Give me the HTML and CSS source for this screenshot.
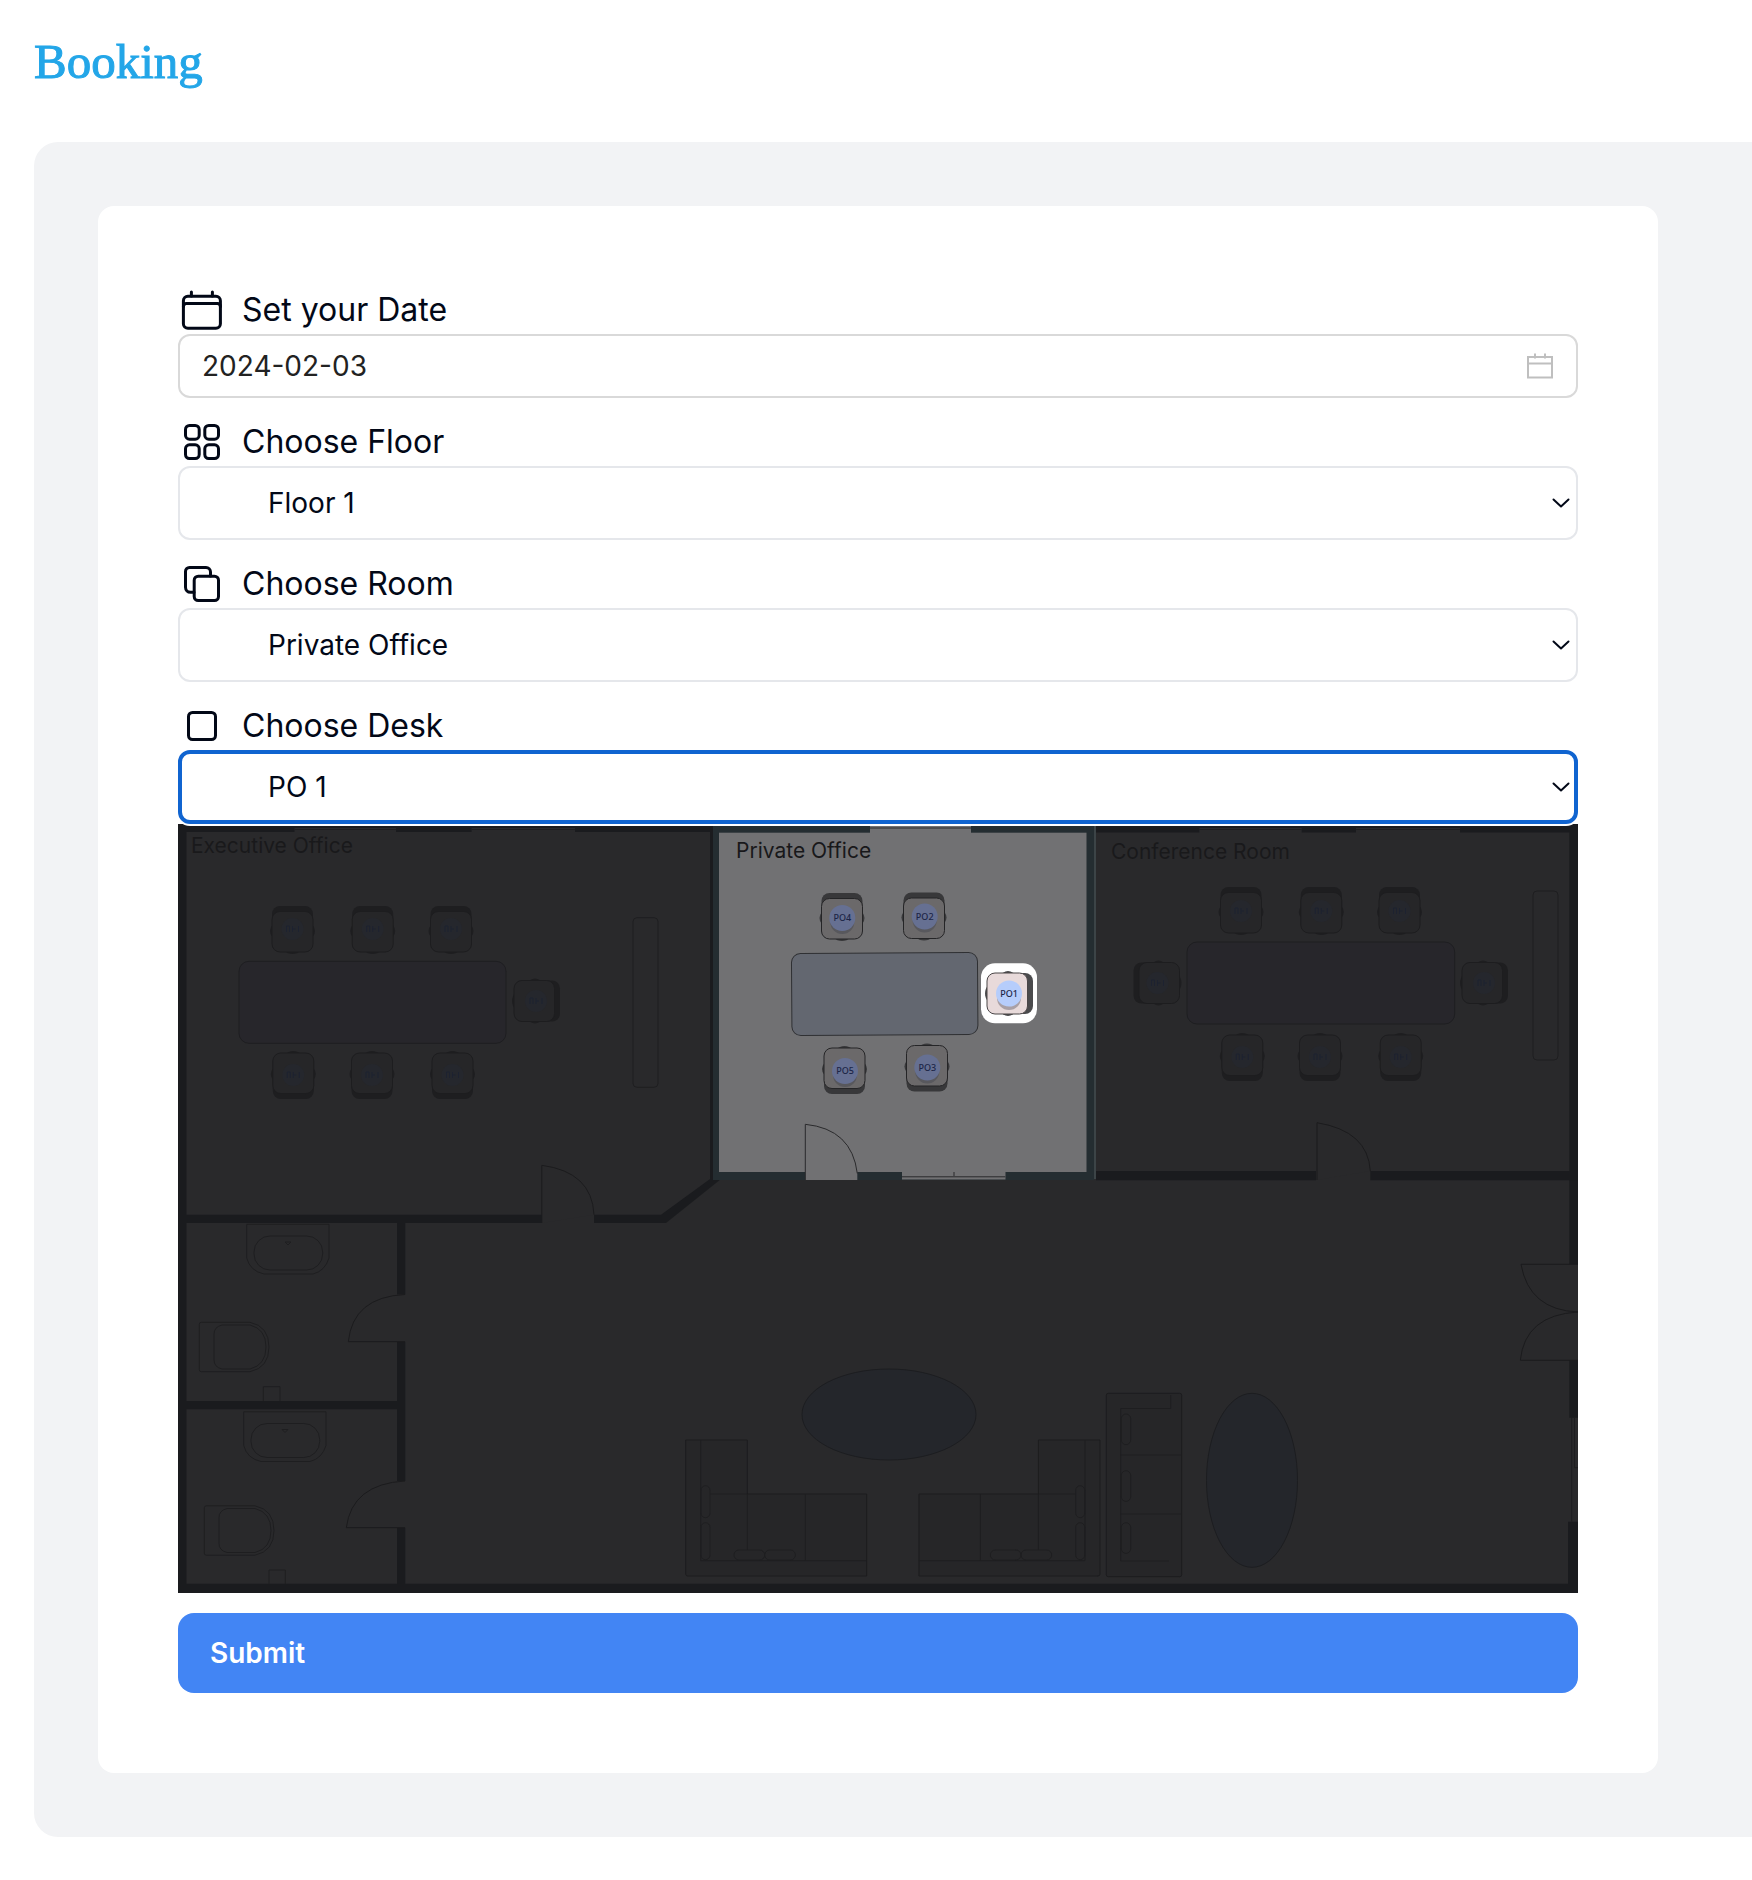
FILE: index.html
```html
<!DOCTYPE html>
<html lang="en">
<head>
<meta charset="utf-8">
<meta name="viewport" content="width=device-width, initial-scale=1">
<title>Booking</title>
<link rel="stylesheet" href="styles.css">
</head>
<body>
<header class="page-header">
  <h1 class="page-title">Booking</h1>
</header>
<main class="panel">
  <form class="card">
    <div class="field">
      <label class="field-label" for="date">
        <svg class="field-icon" viewBox="0 0 48 48" aria-hidden="true"><rect x="5.400" y="10.200" width="37" height="32" rx="4.500"/><path d="M5.400 20.500c0-2 1-3 3-3h31c2 0 3 1 3 3M13.400 6V10M34.400 6V10"/></svg>
        Set your Date
      </label>
      <div class="date-box">
        <input class="date-input" id="date" type="text" value="2024-02-03">
        <svg class="date-icon" viewBox="0 0 28 28" aria-hidden="true"><path d="M2 5h24v20.500H2zM2 11.500h24M9 1.500v5M19 1.500v5"/></svg>
      </div>
    </div>
    <div class="field">
      <label class="field-label" for="floor">
        <svg class="field-icon" viewBox="0 0 48 48" aria-hidden="true"><rect x="7.500" y="7.500" width="13.700" height="13.700" rx="4"/><rect x="26.800" y="7.500" width="13.700" height="13.700" rx="4"/><rect x="7.500" y="26.800" width="13.700" height="13.700" rx="4"/><rect x="26.800" y="26.800" width="13.700" height="13.700" rx="4"/></svg>
        Choose Floor
      </label>
      <div class="select-box">
        <select class="select" id="floor"><option>Floor 1</option></select>
        <svg class="chevron" viewBox="0 0 24 24" aria-hidden="true"><path d="M4.500 8.500l7.500 7 7.500-7"/></svg>
      </div>
    </div>
    <div class="field">
      <label class="field-label" for="room">
        <svg class="field-icon" viewBox="0 0 48 48" aria-hidden="true"><rect x="16.200" y="16.200" width="24.300" height="24.300" rx="4"/><path d="M16 32.300h-3.500a5 5 0 0 1-5-5v-15.800a4 4 0 0 1 4-4h16.500a4.500 4.500 0 0 1 4.500 4.500v4"/></svg>
        Choose Room
      </label>
      <div class="select-box">
        <select class="select" id="room"><option>Private Office</option></select>
        <svg class="chevron" viewBox="0 0 24 24" aria-hidden="true"><path d="M4.500 8.500l7.500 7 7.500-7"/></svg>
      </div>
    </div>
    <div class="field">
      <label class="field-label" for="desk">
        <svg class="field-icon" viewBox="0 0 48 48" aria-hidden="true"><rect x="10.500" y="10.500" width="27" height="27" rx="4"/></svg>
        Choose Desk
      </label>
      <div class="select-box select-box-active">
        <select class="select" id="desk"><option>PO 1</option></select>
        <svg class="chevron" viewBox="0 0 24 24" aria-hidden="true"><path d="M4.500 8.500l7.500 7 7.500-7"/></svg>
      </div>
      <svg class="plan" viewBox="0 0 1400 769" role="img" aria-label="Floor 1 plan with desk PO1 selected">
        <defs>
          <!-- Chair facing down, centred on the origin, backrest on top -->
          <g id="chair">
            <rect class="chair-back" x="-20.500" y="-24" width="41" height="30" rx="8"/>
            <ellipse class="chair-back" cx="0" cy="1" rx="22.500" ry="13"/>
            <ellipse class="chair-back" cx="0" cy="12" rx="12" ry="12"/>
            <rect class="chair-seat" x="-20.500" y="-18.500" width="41" height="40.500" rx="8"/>
          </g>
          <g id="tag">
            <circle class="tag-dot" r="11"/>
            <path class="tag-mark" d="M-6-3v6M-6-3h3v6M0-3v6M0 0h3M6-3v6"/>
          </g>
          <g id="sofa">
            <path class="sofa" d="M507.700 616H569.300V670H688.700V752H509.700q-2 0-2-2z"/>
            <path class="line" d="M522.700 616V736.700H688.700M532 670H569.300V726M627.300 670V736.700"/>
            <rect class="line" x="523" y="661.700" width="9" height="32" rx="4.500"/>
            <rect class="line" x="523" y="698.700" width="9" height="37" rx="4.500"/>
            <rect class="line" x="556" y="726" width="30.700" height="10" rx="5"/>
            <rect class="line" x="586.700" y="726" width="30.700" height="10" rx="5"/>
          </g>
          <g id="washroom">
            <path class="line" d="M68.700 400.300H151V434q-4 13-16 16H86q-14-3-17.300-16z"/>
            <rect class="line" x="76" y="412" width="68.700" height="34" rx="16"/>
            <path class="line" d="M107 418l3 3 3-3z"/>
          </g>
          <g id="toilet">
            <path class="line" d="M23.300 498.300H72q19 4 19 24.700t-19 24.700H23.300q-2 0-2-2V500.300q0-2 2-2z"/>
            <path class="line" d="M44 501H72q16 4 16 22t-16 22H44q-8-2-8-9V510q0-7 8-9z"/>
          </g>
        </defs>

        <rect class="floor" width="1400" height="769"/>

        <!-- Outer and inner walls -->
        <path class="wall" d="M0 0H1400V440.300H1391.300V8.500H1282V4H1178V8.500H1123.700V4H1021.300V8.500H541V8H397V4H293.600V8H218V4H116.500V8H8.500V390.700H363.800V399H227.300V470.500H219V399H8.500V577H219V517.700H227.300V657H219V585.300H8.500V759.700H219V703.700H227.300V759.700H1390V697.700H1400V769H0z"/>
        <path class="wall" d="M1391.300 536.300H1400V593.700H1391.300zM532 2H541V356H532zM918 347H1138V356.300H918zM1192.300 347H1400V356.300H1192.300zM416 390.700H483L532 355H543L488 399H416z"/>
        <path class="line" d="M116.500 5.500H218M293.600 5.500H397M1021.300 5.500H1123.700M1178 5.500H1282M1393.700 593.700V697.700M1396.500 593.700V643.700H1400"/>

        <!-- Doors -->
        <path class="door" d="M363.800 399V341.300Q414 348 416 390.700"/>
        <path class="door" d="M1139 356V298.700Q1190 307 1192.300 347"/>
        <path class="door" d="M227 470.500Q175 473 170.300 517.700H227"/>
        <path class="door" d="M227 657Q174 660 168.300 703.700H227"/>
        <path class="door" d="M1400 440.300H1343Q1351 486 1400 488Q1347 491 1342.300 536.300H1400"/>

        <!-- Executive office -->
        <text class="room-name room-name-dim" x="13" y="29">Executive Office</text>
        <g class="dim">
          <rect class="table" x="61" y="137.300" width="267" height="82" rx="10"/>
          <rect class="line" x="455" y="93.700" width="25" height="169.600" rx="4"/>
          <use href="#chair" x="114.500" y="106"/><use href="#tag" x="114.500" y="105"/>
          <use href="#chair" x="194.700" y="106"/><use href="#tag" x="194.700" y="105"/>
          <use href="#chair" x="273" y="106"/><use href="#tag" x="273" y="105"/>
          <use href="#chair" transform="translate(358 177) rotate(90)"/><use href="#tag" x="358" y="177"/>
          <use href="#chair" transform="translate(115.300 251) rotate(180)"/><use href="#tag" x="115.300" y="251"/>
          <use href="#chair" transform="translate(194 251) rotate(180)"/><use href="#tag" x="194" y="251"/>
          <use href="#chair" transform="translate(274.500 251) rotate(180)"/><use href="#tag" x="274.500" y="251"/>
        </g>

        <!-- Conference room -->
        <text class="room-name room-name-dim" x="933" y="35">Conference Room</text>
        <g class="dim">
          <rect class="table" x="1009" y="118" width="267.700" height="82" rx="10"/>
          <rect class="line" x="1355" y="67" width="25" height="169" rx="4"/>
          <use href="#chair" x="1063" y="87"/><use href="#tag" x="1063" y="87"/>
          <use href="#chair" x="1143.300" y="87"/><use href="#tag" x="1143.300" y="87"/>
          <use href="#chair" x="1221.500" y="87"/><use href="#tag" x="1221.500" y="87"/>
          <use href="#chair" transform="translate(979.500 159) rotate(-90)"/><use href="#tag" x="979.500" y="159"/>
          <use href="#chair" transform="translate(1306 159) rotate(90)"/><use href="#tag" x="1306" y="159"/>
          <use href="#chair" transform="translate(1064.300 233) rotate(180)"/><use href="#tag" x="1064.300" y="233"/>
          <use href="#chair" transform="translate(1142 233) rotate(180)"/><use href="#tag" x="1142" y="233"/>
          <use href="#chair" transform="translate(1222.700 233) rotate(180)"/><use href="#tag" x="1222.700" y="233"/>
        </g>

        <!-- Washrooms -->
        <use href="#washroom"/>
        <use href="#washroom" x="-3" y="187.500"/>
        <use href="#toilet"/>
        <use href="#toilet" x="5" y="183.500"/>
        <path class="line" d="M85.300 577V562.700H102V577M91 760V746H107.300V760"/>

        <!-- Lounge -->
        <ellipse class="coffee-table" cx="711" cy="590.500" rx="87" ry="45.500"/>
        <ellipse class="coffee-table" cx="1074" cy="656.300" rx="45.500" ry="87"/>
        <use href="#sofa"/>
        <use href="#sofa" transform="translate(1429.700 0) scale(-1 1)"/>
        <rect class="sofa" x="928.300" y="569.300" width="75.400" height="183.400" rx="2"/>
        <path class="line" d="M992.700 571V584.500H942.700V737H991M942.700 631H1003.700M942.700 690H1003.700"/>
        <rect class="line" x="943.300" y="590" width="9.400" height="30.700" rx="4.700"/>
        <rect class="line" x="943.300" y="646.700" width="9.400" height="30.700" rx="4.700"/>
        <rect class="line" x="943.300" y="698.700" width="9.400" height="30.700" rx="4.700"/>

        <!-- Private office, highlighted -->
        <rect class="room-wall" x="535" y="2" width="381" height="354"/>
        <rect class="room-edge" x="916" y="2" width="2" height="353"/>
        <rect class="room-floor" x="541" y="8.700" width="367.500" height="339.300"/>
        <rect class="room-floor" x="692" y="2" width="101" height="7"/>
        <rect class="room-floor" x="627.300" y="340" width="52" height="16"/>
        <rect class="room-floor" x="724" y="346" width="103.500" height="9.500"/>
        <path class="room-line" d="M692 4H793M627.300 356V300.300Q674 305 679.300 349.500M724 352.800H827.300M776 348V352"/>
        <text class="room-name" x="558" y="34">Private Office</text>
        <rect class="room-table" x="613.700" y="129" width="186" height="82" rx="9" transform="rotate(-0.400 707 170)"/>
        <g class="lit">
          <use href="#chair" x="664" y="93"/><circle class="tag-shadow" cx="664.300" cy="98" r="12"/><circle class="tag-dot" cx="664.300" cy="94" r="13"/><text class="desk-name" x="664.300" y="97">PO4</text>
          <use href="#chair" x="746" y="92.500"/><circle class="tag-shadow" cx="746.700" cy="96.500" r="12"/><circle class="tag-dot" cx="746.700" cy="92.500" r="13"/><text class="desk-name" x="746.700" y="95.500">PO2</text>
          <use href="#chair" transform="translate(666.500 246) rotate(180)"/><circle class="tag-shadow" cx="667" cy="251" r="12"/><circle class="tag-dot" cx="667" cy="247" r="13"/><text class="desk-name" x="667" y="250">PO5</text>
          <use href="#chair" transform="translate(749 243.500) rotate(180)"/><circle class="tag-shadow" cx="749.300" cy="247.500" r="12"/><circle class="tag-dot" cx="749.300" cy="243.500" r="13"/><text class="desk-name" x="749.300" y="246.500">PO3</text>
        </g>
        <rect class="pick" x="803" y="139.300" width="56" height="60" rx="14"/>
        <g class="picked">
          <use href="#chair" transform="translate(831 169.500) rotate(90)"/><circle class="tag-shadow" cx="831" cy="174" r="12"/><circle class="tag-dot" cx="831" cy="169.500" r="13"/><text class="desk-name" x="831" y="172.500">PO1</text>
        </g>
      </svg>
    </div>
    <button class="submit" type="button">Submit</button>
  </form>
</main>
</body>
</html>
```
FILE: styles.css
```css
*,
*::before,
*::after {
  box-sizing: border-box;
}

body {
  margin: 0;
  background: #fff;
  color: #020817;
  font-family: Inter, "Liberation Sans", sans-serif;
  font-size: 28px;
  line-height: 40px;
}

.page-header {
  padding: 34px 34px 52px;
}

.page-title {
  margin: 0;
  color: #23a6e8;
  font-family: "Liberation Serif", serif;
  font-size: 49px;
  font-weight: 400;
  line-height: 56px;
  -webkit-text-stroke: 1px #23a6e8;
}

.panel {
  margin-left: 34px;
  padding: 64px 94px 64px 64px;
  border-radius: 24px 0 0 24px;
  background: #f2f3f5;
}

.card {
  display: flex;
  flex-direction: column;
  gap: 20px;
  padding: 80px;
  border-radius: 16px;
  background: #fff;
}

.field {
  display: flex;
  flex-direction: column;
}

.field-label {
  display: flex;
  align-items: center;
  gap: 16px;
  font-size: 32px;
  line-height: 48px;
}

.field-icon {
  width: 48px;
  height: 48px;
  fill: none;
  stroke: currentColor;
  stroke-width: 3;
  stroke-linecap: round;
  stroke-linejoin: round;
}

.date-box {
  display: flex;
  align-items: center;
  height: 64px;
  padding: 0 22px;
  border: 2px solid #d9d9d9;
  border-radius: 12px;
}

.date-input {
  flex: 1;
  min-width: 0;
  padding: 0;
  border: 0;
  outline: 0;
  background: none;
  color: #222;
  font: inherit;
}

.date-icon {
  width: 28px;
  height: 28px;
  fill: none;
  stroke: #bfbfbf;
  stroke-width: 2;
}

.select-box {
  display: grid;
  align-items: center;
}

.select {
  grid-area: 1 / 1;
  width: 100%;
  height: 74px;
  padding: 0 48px 0 88px;
  border: 2px solid #e5e7eb;
  border-radius: 12px;
  outline: 0;
  appearance: none;
  background: #fff;
  color: inherit;
  font: inherit;
}

.chevron {
  grid-area: 1 / 1;
  z-index: 1;
  justify-self: end;
  width: 24px;
  height: 24px;
  margin-right: 5px;
  fill: none;
  stroke: currentColor;
  stroke-width: 2;
  stroke-linecap: round;
  stroke-linejoin: round;
  pointer-events: none;
}

.select-box-active {
  position: relative;
  z-index: 1;
}

.select-box-active .select {
  padding-left: 86px;
  border: 4px solid #1064d0;
  box-shadow: 0 0 0 2px #fff;
}

.submit {
  height: 80px;
  padding: 0 32px;
  border: 0;
  border-radius: 16px;
  background: #4285f4;
  color: #fff;
  font: inherit;
  font-weight: 600;
  text-align: left;
}

/* Floor plan */

.plan {
  display: block;
  width: 100%;
  height: auto;
}

.floor {
  fill: #29292b;
}

.wall {
  fill: #1a1b1e;
}

.line {
  fill: none;
  stroke: #1e1e20;
  stroke-width: 1;
}

.door {
  fill: #29292b;
  stroke: #1b1b1d;
  stroke-width: 1;
}

.sofa {
  fill: #262628;
  stroke: #1c1c1e;
}

.coffee-table {
  fill: #24262b;
  stroke: #1c1d20;
}

.room-name {
  fill: #18181a;
  font-size: 21px;
}

.room-name-dim {
  fill: #19191b;
}

.room-wall {
  fill: #242d31;
}

.room-edge {
  fill: #3c4447;
}

.room-floor {
  fill: #717173;
}

.room-line {
  fill: none;
  stroke: #2a2a2c;
  stroke-width: 1;
}

.room-table {
  fill: #636770;
  stroke: #2f3033;
}

.dim {
  --back: #1e1e20;
  --seat: #262628;
  --edge: #1d1d1f;
  --dot: #25272d;
}

.lit {
  --back: #38383a;
  --seat: #6b696a;
  --edge: #252527;
  --dot: #667092;
  --dot-shadow: #58585d;
}

.picked {
  --back: #4a4a4c;
  --seat: #e8dada;
  --edge: #4a4647;
  --dot: #b6cdfb;
  --dot-shadow: #a9a0a6;
}

.table {
  fill: #27262b;
  stroke: #1e1e21;
}

.chair-back {
  fill: var(--back);
}

.chair-seat {
  fill: var(--seat);
  stroke: var(--edge);
}

.tag-dot {
  fill: var(--dot);
}

.tag-shadow {
  fill: var(--dot-shadow);
}

.tag-mark {
  fill: none;
  stroke: #1d2230;
}

.desk-name {
  fill: #1c2547;
  font-family: "Noto Sans", sans-serif;
  font-size: 9px;
  font-weight: 500;
  text-anchor: middle;
}

.pick {
  fill: #fff;
}
```
